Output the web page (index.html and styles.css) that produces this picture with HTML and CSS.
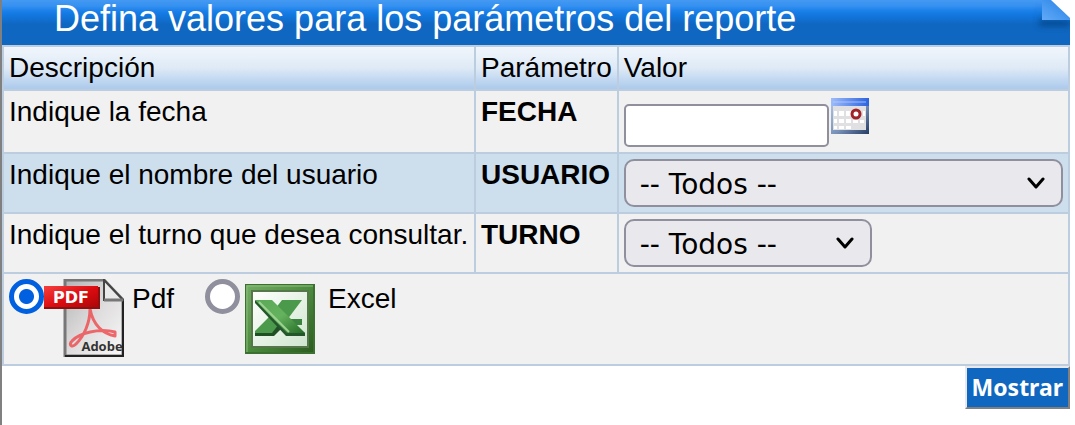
FILE: index.html
```html
<!DOCTYPE html>
<html lang="es">
<head>
    <meta charset="UTF-8">
    <meta name="viewport" content="width=device-width, initial-scale=1.0">
    <title>Parámetros del reporte</title>
    <link rel="stylesheet" href="styles.css">
</head>
<body>
    <form class="report-form">
        <header class="title-bar">
            <h1>Defina valores para los parámetros del reporte</h1>
            <svg class="page-fold" viewBox="0 0 38 34" aria-hidden="true">
                <defs>
                    <linearGradient id="fold" x1="0" y1="1" x2="1" y2="0">
                        <stop offset="0" stop-color="#62aaf7"/>
                        <stop offset="1" stop-color="#2381e6"/>
                    </linearGradient>
                    <filter id="foldShadow" x="-50%" y="-50%" width="200%" height="200%">
                        <feGaussianBlur stdDeviation="3"/>
                    </filter>
                </defs>
                <path d="M8 0V20H38V26H7Z" fill="#06407f" opacity=".8" filter="url(#foldShadow)"/>
                <path d="M10 0H19L38 18V20H10Z" fill="url(#fold)"/>
                <path d="M19 0H38V18Z" fill="#fff"/>
            </svg>
        </header>

        <table class="params">
            <thead>
                <tr>
                    <th class="col-desc" scope="col">Descripción</th>
                    <th class="col-param" scope="col">Parámetro</th>
                    <th scope="col">Valor</th>
                </tr>
            </thead>
            <tbody>
                <tr>
                    <td><label for="fecha">Indique la fecha</label></td>
                    <td class="name">FECHA</td>
                    <td>
                        <div class="date-field">
                            <input type="text" id="fecha" name="fecha">
                            <button type="button" class="calendar-btn" aria-label="Calendario">
                                <svg viewBox="0 0 38 36">
                                    <defs>
                                        <linearGradient id="calTop" x1="0" x2="1">
                                            <stop offset="0" stop-color="#9dbcfa"/>
                                            <stop offset="1" stop-color="#2b62df"/>
                                        </linearGradient>
                                        <linearGradient id="calEdge" x1="0" y1="0" x2="1" y2="1">
                                            <stop offset="0" stop-color="#b4c8ee"/>
                                            <stop offset=".55" stop-color="#7891b8"/>
                                            <stop offset="1" stop-color="#263d63"/>
                                        </linearGradient>
                                    </defs>
                                    <path d="M0 0H38V36H0Z" fill="url(#calEdge)"/>
                                    <path d="M2 7H35V32H2Z" fill="#e0e0e2"/>
                                    <path d="M0 0H38V8H0Z" fill="url(#calTop)"/>
                                    <path d="M2 4H35" stroke="#b9cefb" stroke-width="2" opacity=".4"/>
                                    <path d="M3 13h3v5H3zM8 13h5v5H8zM15 13h5v5h-5zM32 13h2v5h-2zM3 21h3v4H3zM8 21h5v4H8zM15 21h5v4h-5zM22 22h5v3h-5zM29 22h4v3h-4zM3 28h3v3H3zM8 28h5v3H8zM15 28h5v3h-5z" fill="#fff"/>
                                    <circle cx="25" cy="16" r="4" fill="#fff" stroke="#a12328" stroke-width="3"/>
                                </svg>
                            </button>
                        </div>
                    </td>
                </tr>
                <tr class="alt">
                    <td><label for="usuario">Indique el nombre del usuario</label></td>
                    <td class="name">USUARIO</td>
                    <td>
                        <select id="usuario" name="usuario" class="wide">
                            <option>-- Todos --</option>
                        </select>
                    </td>
                </tr>
                <tr>
                    <td><label for="turno">Indique el turno que desea consultar.</label></td>
                    <td class="name">TURNO</td>
                    <td>
                        <select id="turno" name="turno">
                            <option>-- Todos --</option>
                        </select>
                    </td>
                </tr>
                <tr>
                    <td colspan="3">
                        <div class="formats">
                            <label class="format">
                                <input type="radio" name="formato" value="pdf" checked>
                                <svg class="pdf-icon" viewBox="0 0 80 78" aria-hidden="true">
                                    <defs>
                                        <linearGradient id="sheet" x1="0" y1="0" x2="1" y2="1">
                                            <stop offset="0" stop-color="#b4b4b4"/>
                                            <stop offset=".5" stop-color="#dedcdc"/>
                                            <stop offset="1" stop-color="#fafafa"/>
                                        </linearGradient>
                                        <linearGradient id="redTag" x1="0" y1="0" x2="1" y2="1">
                                            <stop offset="0" stop-color="#f5403d"/>
                                            <stop offset=".5" stop-color="#dd0c10"/>
                                            <stop offset="1" stop-color="#a80508"/>
                                        </linearGradient>
                                    </defs>
                                    <path d="M21 1H60L79 21V77H21Z" fill="url(#sheet)" stroke="#777" stroke-width="3"/>
                                    <path d="M79 21V77H21" fill="none" stroke="#222" stroke-width="2"/>
                                    <path d="M60 1L79 21H60Z" fill="#e9e9e9" stroke="#444" stroke-width="2"/>
                                    <path d="M60 21H79" stroke="#777" stroke-width="3"/>
                                    <path d="M46 30C46 44 40 57 32 65C28 69 24 66 28 62C35 54 55 49 71 53V57C59 55 49 46 46 30Z" fill="none" stroke="#ec5154" stroke-width="3" stroke-linejoin="round" opacity=".85"/>
                                    <path d="M0 7H54V30H0Z" fill="url(#redTag)"/>
                                    <path d="M0 29H55V8" fill="none" stroke="#8b1012" stroke-width="2"/>
                                    <text class="tag-text" x="27" y="24" text-anchor="middle">PDF</text>
                                    <text class="adobe-text" x="58" y="72" text-anchor="middle">Adobe</text>
                                </svg>
                                <span class="format-name">Pdf</span>
                            </label>
                            <label class="format">
                                <input type="radio" name="formato" value="excel">
                                <svg class="excel-icon" viewBox="0 0 70 70" aria-hidden="true">
                                    <defs>
                                        <linearGradient id="frame" x1="0" y1="0" x2="1" y2="1">
                                            <stop offset="0" stop-color="#74ad65"/>
                                            <stop offset=".5" stop-color="#4c8c3e"/>
                                            <stop offset="1" stop-color="#2c5d20"/>
                                        </linearGradient>
                                        <linearGradient id="inner" x1="0" y1="0" x2="1" y2="1">
                                            <stop offset="0" stop-color="#fff"/>
                                            <stop offset="1" stop-color="#cfe6ce"/>
                                        </linearGradient>
                                        <linearGradient id="cross" x1="0" y1="0" x2="1" y2="1">
                                            <stop offset="0" stop-color="#5aa957"/>
                                            <stop offset=".5" stop-color="#65b25e"/>
                                            <stop offset="1" stop-color="#236b25"/>
                                        </linearGradient>
                                    </defs>
                                    <path d="M0 0H70V70H0Z" fill="#3b7030"/>
                                    <path d="M1 1H68V68H1Z" fill="url(#frame)"/>
                                    <path d="M2 68V2H68" fill="none" stroke="#8cbc7d" stroke-width="1"/>
                                    <path d="M7 7H63V63H7Z" fill="url(#inner)" stroke="#55774b" stroke-width="2"/>
                                    <path d="M37 16H57L42 36L30 49H10V47L23 34Z" fill="#4b994a"/>
                                    <path d="M10 49V52H29L37 44L34 40L27 49Z" fill="#214f25"/>
                                    <path d="M42 35H57V41H48Z" fill="#3b8440"/>
                                    <path d="M10 16V19L41 52H60V49Z" fill="#24562b"/>
                                    <path d="M10 16H27L60 49H42Z" fill="url(#cross)"/>
                                    <path d="M14 18L44 48" stroke="#9dd292" stroke-width="2"/>
                                </svg>
                                <span class="format-name">Excel</span>
                            </label>
                        </div>
                    </td>
                </tr>
            </tbody>
        </table>

        <div class="actions">
            <button type="submit" class="submit-btn">Mostrar</button>
        </div>
    </form>
</body>
</html>
```
FILE: styles.css
```css
* {
    box-sizing: border-box;
}

body {
    margin: 0;
    min-height: 100vh;
    padding-right: 5px;
    border-left: 2px solid #808080;
    background-color: #fff;
    color: #000;
    font-family: "Liberation Sans", Arial, sans-serif;
    font-size: 28px;
    line-height: 32px;
}

.title-bar {
    display: flex;
    justify-content: space-between;
    align-items: flex-start;
    height: 45px;
    padding-left: 52px;
    background: linear-gradient(#4599f3 0, #3590f0 6px, #1a80ea 11px, #1278df 15px, #0f67c2 24px, #0f67c0 100%);
}

h1 {
    margin: 0;
    color: #fff;
    font-size: 36px;
    font-weight: normal;
    line-height: 38px;
    white-space: nowrap;
}

.page-fold {
    width: 38px;
    height: 34px;
    flex-shrink: 0;
}

.params {
    width: 100%;
    border-collapse: collapse;
}

.params th,
.params td {
    padding: 5px;
    border: 2px solid #bccddf;
    text-align: left;
    vertical-align: top;
}

.params th {
    font-weight: normal;
    white-space: nowrap;
}

.params thead tr {
    background: linear-gradient(#f2f6fc, #deeaf6 50%, #a9c8ec);
}

.params tbody tr {
    background-color: #f1f1f1;
}

.params tbody tr.alt {
    background-color: #cddeed;
}

.col-desc {
    width: 472px;
}

.col-param {
    width: 142px;
}

.params td.name {
    font-weight: bold;
}

label {
    display: block;
    white-space: nowrap;
}

.date-field {
    display: flex;
    align-items: flex-start;
    gap: 2px;
}

input[type="text"] {
    width: 205px;
    height: 43px;
    margin-top: 8px;
    padding: 2px 4px;
    border: 2px solid #8f8f9d;
    border-radius: 5px;
    background-color: #fff;
    font: inherit;
}

.calendar-btn {
    margin-top: 2px;
    padding: 0;
    border: none;
    background: none;
    cursor: pointer;
}

.calendar-btn svg {
    display: block;
    width: 38px;
    height: 36px;
}

select {
    display: block;
    width: 248px;
    height: 48px;
    padding: 2px 14px 0;
    border: 2px solid #8f8f9d;
    border-radius: 10px;
    appearance: none;
    background: #e9e9ed url("data:image/svg+xml,%3Csvg xmlns='http://www.w3.org/2000/svg' width='18' height='12'%3E%3Cpath d='M2 2L9 10L16 2' fill='none' stroke='%23000' stroke-width='3' stroke-linecap='round' stroke-linejoin='round'/%3E%3C/svg%3E") no-repeat right 16px center;
    color: #000;
    font-family: Verdana, "DejaVu Sans", sans-serif;
    font-size: 28px;
}

select.wide {
    width: 100%;
}

.formats {
    display: flex;
    gap: 31px;
    min-height: 80px;
}

.format {
    display: flex;
    align-items: flex-start;
}

input[type="radio"] {
    width: 35px;
    height: 35px;
    margin: 0;
    border: 5px solid #8f8f9d;
    border-radius: 50%;
    appearance: none;
    background-color: #fff;
}

input[type="radio"]:checked {
    border-color: #0060df;
    background: radial-gradient(circle, #0060df 7px, #fff 8px);
}

.pdf-icon {
    width: 80px;
    height: 78px;
}

.excel-icon {
    width: 70px;
    height: 70px;
    margin: 5px 5px 0;
}

.format-name {
    margin-left: 8px;
    line-height: 40px;
}

.tag-text {
    fill: #fff;
    font-family: "DejaVu Sans", sans-serif;
    font-size: 16px;
    font-weight: bold;
}

.adobe-text {
    fill: #333;
    font-family: "Open Sans", sans-serif;
    font-size: 13px;
    font-weight: bold;
}

.actions {
    display: flex;
    justify-content: flex-end;
}

.submit-btn {
    padding: 3px 5px;
    border: 2px solid;
    border-color: #e9e9ed #808080 #808080 #e9e9ed;
    background-color: #0f67c0;
    color: #fff;
    font-family: Tahoma, "Noto Sans", sans-serif;
    font-size: 23px;
    font-weight: bold;
    line-height: 33px;
    cursor: pointer;
}
```
